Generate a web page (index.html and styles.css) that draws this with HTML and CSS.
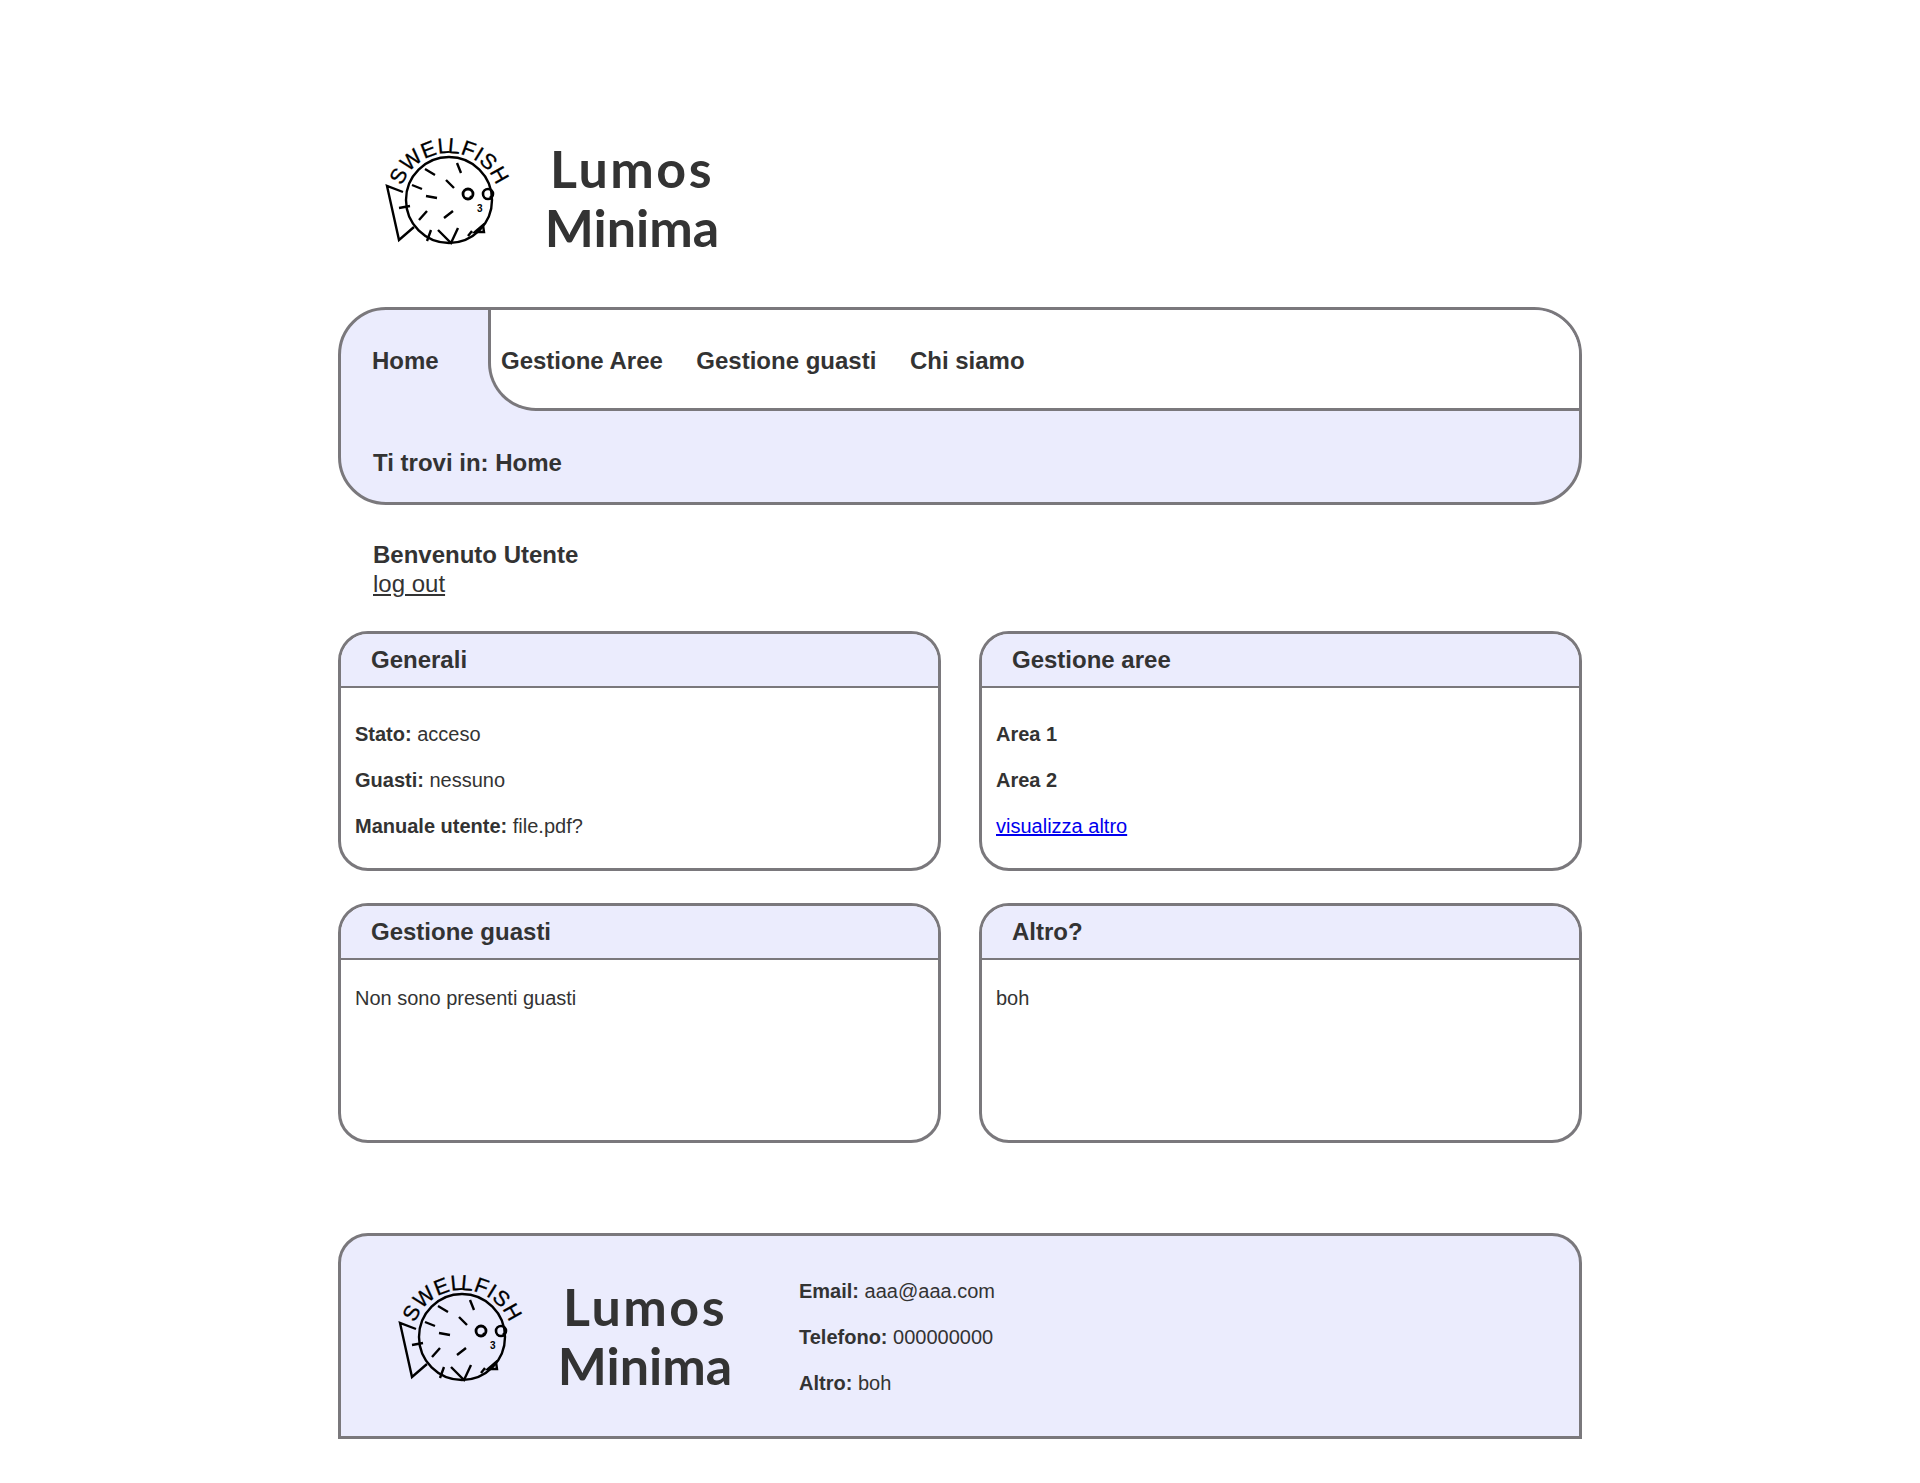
FILE: index.html
```html
<!DOCTYPE html>
<html lang="en">

<head>
    <meta charset="UTF-8">
    <meta name="viewport" content="width=device-width, initial-scale=1.0">
    <title>Lumos Minima</title>
    <link rel="stylesheet" href="styles.css">
</head>

<body>
    <svg class="defs" width="0" height="0">
        <defs>
            <path id="logo-arc" d="M27 56 A50.3 50.3 0 0 1 123 61" />
            <symbol id="logo-fish" viewBox="0 0 140 120">
                <circle cx="74" cy="70" r="43" fill="none" stroke="#000" stroke-width="2.4" />
                <path d="M28 62 L12 56 L24 110 L39 97" fill="none" stroke="#000" stroke-width="2.4" />
                <path d="M50 39 L60 45 M82 33 L86 43 M71 50 L79 58 M37 55 L47 59 M51 66 L62 68 M44 90 L52 81 M69 88 L78 81 M24 78 L35 76 M52 111 L56 100 M63 100 L76 113 L83 98 M93 106 L97 101 M100 102 L108 95 L109 102 Z" fill="none" stroke="#000" stroke-width="2.4" />
                <circle cx="93" cy="64" r="5" fill="none" stroke="#000" stroke-width="2.8" />
                <circle cx="113" cy="64" r="5" fill="none" stroke="#000" stroke-width="2.6" />
                <circle cx="96" cy="67" r="1.6" />
                <circle cx="116" cy="67" r="1.6" />
                <text x="102" y="82" class="logo-mouth">3</text>
                <text class="logo-name"><textPath href="#logo-arc">SWEL<tspan dx="-3">L</tspan>FISH</textPath></text>
            </symbol>
        </defs>
    </svg>

    <div class="page">
        <header class="top">
            <svg class="logo"><use href="#logo-fish" /></svg>
            <div class="brand"><span class="brand-first">Lumos</span><br>Minima</div>
        </header>

        <nav class="nav">
            <div class="menu">
                <a class="tab" href="#">Home</a>
                <div class="links">
                    <a href="#">Gestione Aree</a>
                    <a href="#">Gestione guasti</a>
                    <a href="#">Chi siamo</a>
                </div>
            </div>
            <div class="crumb">Ti trovi in: Home</div>
        </nav>

        <div class="welcome">
            <strong>Benvenuto Utente</strong><br>
            <a href="#">log out</a>
        </div>

        <div class="cards">
            <section class="card">
                <h2>Generali</h2>
                <div class="card-body rows">
                    <p><b>Stato:</b> acceso</p>
                    <p><b>Guasti:</b> nessuno</p>
                    <p><b>Manuale utente:</b> file.pdf?</p>
                </div>
            </section>
            <section class="card">
                <h2>Gestione aree</h2>
                <div class="card-body rows">
                    <p><b>Area 1</b></p>
                    <p><b>Area 2</b></p>
                    <p><a class="more" href="#">visualizza altro</a></p>
                </div>
            </section>
            <section class="card">
                <h2>Gestione guasti</h2>
                <div class="card-body">
                    <p>Non sono presenti guasti</p>
                </div>
            </section>
            <section class="card">
                <h2>Altro?</h2>
                <div class="card-body">
                    <p>boh</p>
                </div>
            </section>
        </div>

        <footer class="foot">
            <svg class="logo"><use href="#logo-fish" /></svg>
            <div class="brand"><span class="brand-first">Lumos</span><br>Minima</div>
            <div class="contacts rows">
                <p><b>Email:</b> aaa@aaa.com</p>
                <p><b>Telefono:</b> 000000000</p>
                <p><b>Altro:</b> boh</p>
            </div>
        </footer>
    </div>
</body>

</html>
```
FILE: styles.css
```css
body {
    font-family: "Liberation Sans", Arial, sans-serif;
    margin: 0;
    color: #333;
    background: #fff;
}

.defs {
    position: absolute;
}

.page {
    width: 1244px;
    margin: 0 auto;
    padding-top: 130px;
    padding-bottom: 45px;
}

.top {
    display: flex;
    align-items: flex-start;
    padding-left: 37px;
    height: 127px;
    margin-bottom: 50px;
}

.logo {
    width: 140px;
    height: 120px;
    flex: none;
}

.logo-name {
    font-family: "Liberation Sans", Arial, sans-serif;
    font-size: 21.5px;
    letter-spacing: 0.4px;
    stroke: #000;
    stroke-width: 0.3px;
}

.logo-mouth {
    font-family: "Liberation Sans", Arial, sans-serif;
    font-size: 10px;
    font-weight: bold;
}

.brand {
    font-family: Lato, "Liberation Sans", sans-serif;
    font-size: 52px;
    font-weight: 700;
    line-height: 59px;
    text-align: center;
    width: 180px;
    margin: 10px 0 0 27px;
    flex: none;
}

.top .brand {
    margin-top: 9px;
}

.brand-first {
    letter-spacing: 2.5px;
}

.nav {
    border: 3px solid #7a787c;
    border-radius: 48px;
    background: #ebecfd;
    overflow: hidden;
}

.menu {
    display: flex;
    height: 101px;
    font-size: 24px;
    font-weight: bold;
}

.menu a {
    color: #333;
    text-decoration: none;
}

.tab {
    width: 147px;
    flex: none;
    box-sizing: border-box;
    padding: 37px 0 0 31px;
}

.links {
    flex: 1;
    display: flex;
    gap: 33.5px;
    padding: 37px 0 0 10px;
    background: #fff;
    border-left: 3px solid #7a787c;
    border-bottom: 3px solid #7a787c;
    border-bottom-left-radius: 48px;
}

.crumb {
    font-size: 24px;
    font-weight: bold;
    padding: 38px 0 25px 32px;
    line-height: 28px;
}

.welcome {
    font-size: 24px;
    line-height: 29px;
    padding: 35px 0 0 35px;
}

.welcome a {
    color: #333;
}

.cards {
    display: grid;
    grid-template-columns: 1fr 1fr;
    column-gap: 38px;
    row-gap: 32px;
    margin-top: 33px;
}

.card {
    height: 240px;
    box-sizing: border-box;
    border: 3px solid #7a787c;
    border-radius: 30px;
    overflow: hidden;
}

.card h2 {
    margin: 0;
    height: 54px;
    box-sizing: border-box;
    padding: 12px 0 0 30px;
    font-size: 24px;
    line-height: 28px;
    background: #ebecfd;
    border-bottom: 2px solid #7a787c;
}

.card-body {
    padding: 27px 14px 0;
    font-size: 20px;
    line-height: 23px;
}

.card-body p {
    margin: 0;
}

.card-body.rows {
    padding-top: 35px;
}

.rows p {
    margin: 0 0 23px;
    line-height: 23px;
}

.more {
    color: #00e;
}

.foot {
    display: flex;
    margin-top: 90px;
    height: 206px;
    box-sizing: border-box;
    padding: 31px 0 0 47px;
    border: 3px solid #7a787c;
    border-radius: 30px 30px 0 0;
    background: #ebecfd;
}

.contacts {
    font-size: 20px;
    margin: 13px 0 0 64px;
}
```
